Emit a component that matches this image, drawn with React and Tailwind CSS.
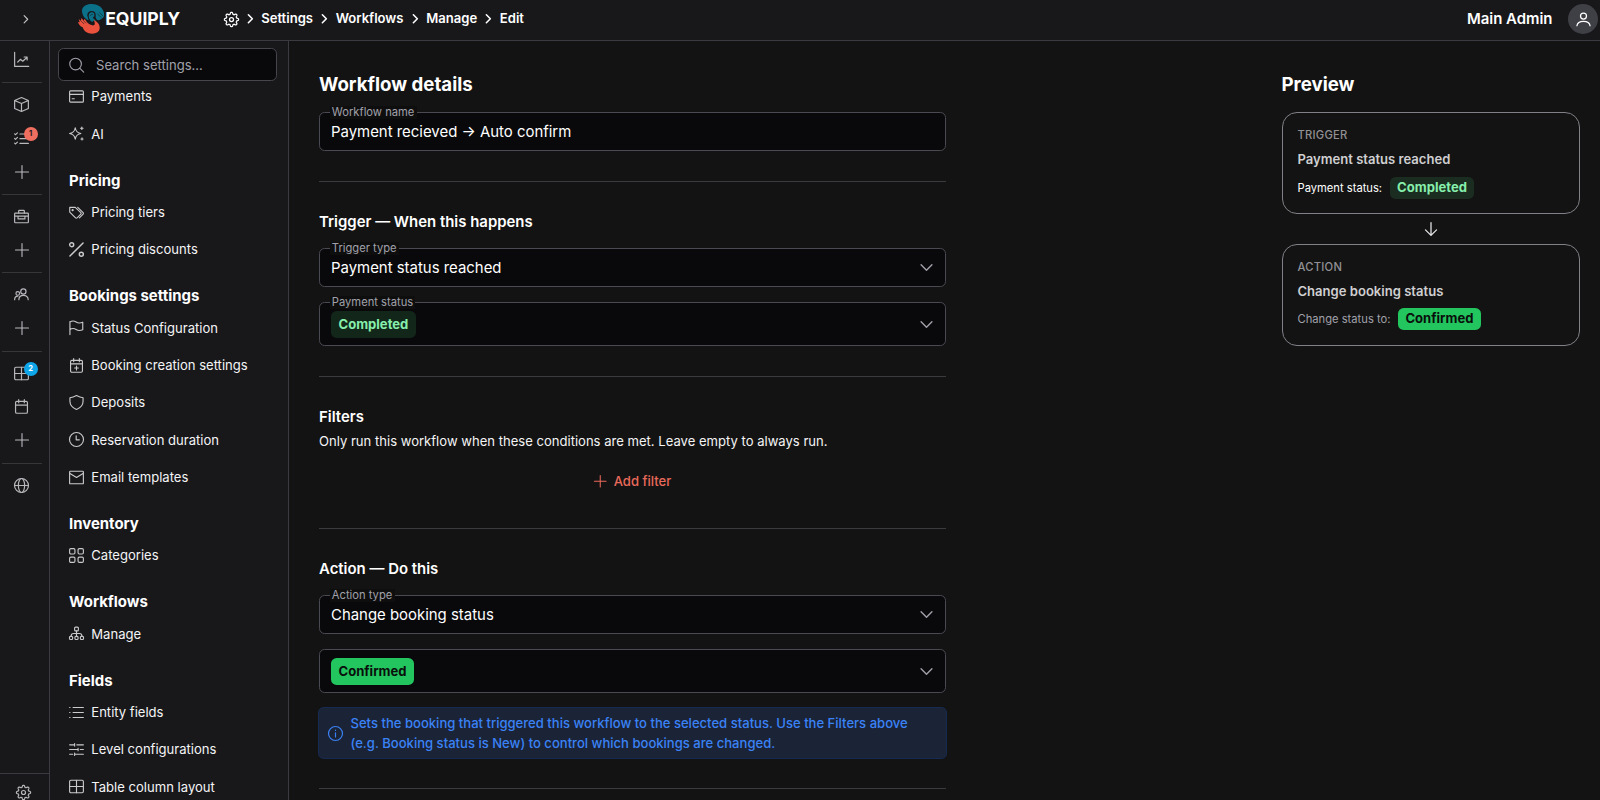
import React from "react";

function Svg({ className = "size-[15px]", sw = 1.9, children }) {
  return (
    <svg viewBox="0 0 24 24" fill="none" stroke="currentColor" strokeWidth={sw} strokeLinecap="round" strokeLinejoin="round" className={`shrink-0 overflow-visible ${className}`}>
      {children}
    </svg>
  );
}

const gearPath = (() => {
  const pts = [];
  for (let i = 0; i < 160; i++) {
    const a = (i / 160) * Math.PI * 2;
    const k = Math.max(-1, Math.min(1, 1.5 * Math.cos(8 * a)));
    const r = 9.9 + 1.4 * k;
    pts.push(`${(12 + r * Math.sin(a)).toFixed(2)} ${(12 - r * Math.cos(a)).toFixed(2)}`);
  }
  return `M${pts.join("L")}Z`;
})();

const icons = {
  gear: <><path d={gearPath} /><circle cx="12" cy="12" r="3.2" /></>,
  chart: <><path d="M1 .5V23h22.5" /><path d="M6 16l4.2-4.3 3.8 3L21 8.5M16.2 8H21v4.8" /></>,
  cube: <path d="M12 .8L23 5.6v12.8L12 23.2 1 18.4V5.6zM1 5.6l11 4.9 11-4.9M12 10.5v12.7" />,
  tasks: <path d="M1 4.6l1.5 1.3L5.5 2.9M1 12l1.5 1.3 3-3M1 19.4l1.5 1.3 3-3M9.5 4.8H23M9.5 12.3H23M9.5 19.8H23" />,
  plus: <path d="M12 .8v22.4M.8 12h22.4" />,
  briefcase: <><rect x="1" y="6.500" width="22" height="15.500" rx="1.200" /><path d="M7.500 6.500V3.200c0-.6.400-1 1-1h7c.6 0 1 .4 1 1v3.300M1 11.500h22M6.500 11.500v4.300h11v-4.300" /></>,
  users: <><circle cx="15" cy="7.200" r="4.200" /><path d="M7.800 20.300c0-4.200 3-7 7.200-7s7.700 2.800 7.700 7" /><circle cx="6" cy="10.300" r="2.900" /><path d="M1 20.300c0-3.800 2-5.800 5.300-5.800" /></>,
  table: <><rect x="1" y="2" width="22" height="20" rx="2" /><path d="M12 2v20M1 12h22" /></>,
  calendar: <><rect x="2.500" y="3.800" width="19" height="19" rx="2" /><path d="M2.500 9.800h19M7.500 1v5M16.500 1v5" /></>,
  calendarPlus: <><rect x="2.500" y="3.800" width="19" height="19" rx="2" /><path d="M2.500 9.300h19M7.500 1v5M16.500 1v5M12 13v6M9 16h6" /></>,
  globe: <><circle cx="12" cy="12" r="11.200" /><ellipse cx="12" cy="12" rx="5" ry="11.200" /><path d="M1 12h22" /></>,
  card: <><rect x="1" y="3" width="22" height="18" rx="1.500" /><path d="M1 8.500h22M5 15.500h3.500" /></>,
  sparkles: <><path d="M10 3c1 5.600 2.700 7.600 9 9-6.300 1.400-8 3.400-9 9-1-5.600-2.700-7.600-9-9 6.300-1.400 8-3.400 9-9z" /><path d="M20.500 1.500v4M18.500 3.500h4M20.800 19v3.400M19.100 20.700h3.400" /></>,
  tags: <><path d="M1.200 3.800v7.500l9.300 9.300c.7.700 1.700.7 2.400 0l6-6c.7-.7.700-1.700 0-2.400L10 3.800z" /><path d="M14 3.800l8.600 8.300c.7.700.7 1.700 0 2.400l-6 6" /><circle cx="5.800" cy="8.300" r=".9" /></>,
  percent: <><circle cx="4.300" cy="4.300" r="3.200" /><circle cx="19.700" cy="19.700" r="3.200" /><path d="M22.500 1.500l-21 21" /></>,
  flag: <path d="M1.500 23.300V2.600M1.500 3.200c4-2.700 7-2 10 0s6.500 2 10.500.3v12c-4 1.700-7.500 1.700-10.500-.3s-6-2.700-10 0" />,
  shield: <path d="M1.500 4.500C6 4 9 2.500 12 .8c3 1.700 6 3.200 10.500 3.700v5.500c0 6-4.500 10.700-10.500 13.200C6 20.700 1.500 16 1.500 10z" />,
  clock: <><circle cx="12" cy="12" r="11.200" /><path d="M11.500 6v6.500h5" /></>,
  mail: <><rect x="1" y="2" width="22" height="20" rx="1" /><path d="M1.500 5.500L12 12l10.500-6.500" /></>,
  grid: <><rect x="1" y="1" width="8.500" height="8.500" rx="2" /><rect x="14.500" y="1" width="8.500" height="8.500" rx="2" /><rect x="1" y="14.500" width="8.500" height="8.500" rx="2" /><rect x="14.500" y="14.500" width="8.500" height="8.500" rx="2" /></>,
  sitemap: <><rect x="9" y="1.800" width="6" height="6" rx="1.500" /><rect x=".8" y="16.500" width="5" height="5" rx="1.500" /><rect x="9.500" y="16.500" width="5" height="5" rx="1.500" /><rect x="18.200" y="16.500" width="5" height="5" rx="1.500" /><path d="M12 7.800v8.700M3.300 16.500c0-2.900 1.200-4.500 4-4.500h9.400c2.800 0 4 1.600 4 4.500" /></>,
  list: <path d="M6.500 4H23M6.500 12H23M6.500 20H23M1 4h.6M1 12h.6M1 20h.6" />,
  sliders: <path d="M1 4.500h8M9 2.500v4M12.500 4.500H23M1 12h13.500M14.500 10v4M18 12h5M1 19.500h5M9 17.500v4M9 19.500h14" />,
  search: <><circle cx="10.500" cy="10.500" r="9.300" /><path d="M17.500 17.500l6 6" /></>,
  info: <><circle cx="12" cy="12" r="11.200" /><path d="M12 11v6.500M12 6.700v.3" /></>,
  user: <><circle cx="12" cy="6.500" r="4.800" /><path d="M1.500 22c.6-4.500 4-7 10.500-7s9.900 2.500 10.500 7" /></>,
  right: <path d="M6 2l10 10L6 22" />,
  down: <path d="M2 7l10 10L22 7" />,
  arrowDown: <path d="M12 1v22M2.500 13.500L12 23l9.500-9.500" />,
};

function Icon({ name, className, sw }) {
  return <Svg className={className} sw={sw}>{icons[name]}</Svg>;
}

function Logo() {
  return (
    <svg viewBox="0 0 80 90" className="h-[30px] w-[26.7px] shrink-0">
      <path fill="#0b7189" d="M12 22C11 8 25 0 41 0c18 0 31 9 35 21l4 11-2 5-3 4-5 4-7 4-5-1c-4-3-6-8-5-13 1-9-4-14-12-14-9 0-14 7-13 14l4 14C21 45 13 35 12 22z" />
      <path fill="#0b7189" d="M33 30c4-7 14-6 16 0 1 6-1 9-5 11l10 9-9 0-1 4c-9-4-14-14-11-24z" />
      <path fill="#ea523e" d="M0 54l5 1-3-10 7 6 1-9 7 8 3-6 7 11c6 6 14 10 20 9 5-1 4-9 0-16 12 5 19 14 18 25-1 11-10 16-22 16-14 0-25-6-29-19-7-3-12-8-14-16z" />
      <path stroke="#18181b" strokeWidth="1.600" fill="none" d="M64 25l11 11M58 29l12 12M9 51l9 9M17 50l7 8M38 36c-2-4 5-7 7-3" />
    </svg>
  );
}

function RailIcon({ name, className = "", badge, badgeClass = "" }) {
  return (
    <div className={`relative flex shrink-0 items-center pl-[14.200px] ${className}`}>
      <Icon name={name} className={name === "plus" ? "mx-[.5px] size-[14px]" : "size-[15px]"} />
      {badge && (
        <span className={`absolute left-[23.700px] top-1/2 flex size-[14px] -translate-y-[11px] items-center justify-center rounded-full text-[7.500px] font-bold leading-none ${badgeClass}`}>{badge}</span>
      )}
    </div>
  );
}

const RailLine = () => <div className="ml-[2px] h-px w-[40px] shrink-0 bg-[#35353a]" />;

function Rail() {
  return (
    <aside className="flex w-[50px] shrink-0 flex-col border-r border-[#3a3a40] text-[#b9b9bd]">
      <RailIcon name="chart" className="mt-[2px] h-[33px]" />
      <div className="h-[6px]" />
      <RailLine />
      <RailIcon name="cube" className="mt-[4px] h-[34px]" />
      <RailIcon name="tasks" className="h-[34px]" badge="1" badgeClass="bg-[#ee6f5f] text-[#18181b]" />
      <RailIcon name="plus" className="h-[33px]" />
      <div className="h-[6px]" />
      <RailLine />
      <RailIcon name="briefcase" className="mt-[5px] h-[33px]" />
      <RailIcon name="plus" className="h-[34px]" />
      <div className="h-[5px]" />
      <RailLine />
      <RailIcon name="users" className="mt-[5px] h-[33px]" />
      <RailIcon name="plus" className="h-[34px]" />
      <div className="h-[6px]" />
      <RailLine />
      <RailIcon name="table" className="mt-[4px] h-[34px]" badge="2" badgeClass="bg-[#0ea5e9] text-white" />
      <RailIcon name="calendar" className="h-[33px]" />
      <RailIcon name="plus" className="h-[33px]" />
      <div className="h-[7px]" />
      <RailLine />
      <RailIcon name="globe" className="mt-[4px] h-[34px]" />
      <div className="mt-auto flex h-[27px] shrink-0 items-start border-t border-[#3a3a40] pl-[16.300px] pt-[11px]">
        <Icon name="gear" className="size-[15px]" />
      </div>
    </aside>
  );
}

const sections = [
  { items: [["card", "Payments"], ["sparkles", "AI"]] },
  { title: "Pricing", items: [["tags", "Pricing tiers"], ["percent", "Pricing discounts"]] },
  { title: "Bookings settings", items: [["flag", "Status Configuration"], ["calendarPlus", "Booking creation settings"], ["shield", "Deposits"], ["clock", "Reservation duration"], ["mail", "Email templates"]] },
  { title: "Inventory", items: [["grid", "Categories"]] },
  { title: "Workflows", items: [["sitemap", "Manage"]] },
  { title: "Fields", items: [["list", "Entity fields"], ["sliders", "Level configurations"], ["table", "Table column layout"]] },
];

function Sidebar() {
  return (
    <aside className="flex w-[239px] shrink-0 flex-col border-r border-[#3a3a40] pt-[7px]">
      <div className="ml-[8px] flex h-[33px] w-[219px] shrink-0 items-center gap-[12px] rounded-[5.600px] border border-[#46464d] bg-[#09090b] pl-[10px] text-[13.070px] text-[#a1a1aa]">
        <Icon name="search" className="size-[15px] translate-y-[.5px]" sw={1.800} />
        <span className="pt-[2px]">Search settings...</span>
      </div>
      <nav className="-mt-[3px] min-h-0 flex-1 overflow-hidden pl-[19px]">
        {sections.map((s, i) => (
          <div key={i}>
            {s.title && <h3 className="flex h-[41px] items-center pt-[15.600px] text-[14.930px] font-bold text-white">{s.title}</h3>}
            {s.items.map(([icon, label]) => (
              <div key={label} className="flex h-[37.330px] items-center gap-[7.300px] text-[13.070px] text-[#f4f4f5]">
                <Icon name={icon} className="size-[15px] text-[#cacacd]" sw={icon === "percent" ? 2.300 : 1.800} />
                <span className="pt-[1.200px]">{label}</span>
              </div>
            ))}
          </div>
        ))}
      </nav>
    </aside>
  );
}

function Header() {
  const crumbs = ["Settings", "Workflows", "Manage", "Edit"];
  return (
    <header className="flex h-[41px] shrink-0 items-center border-b border-[#3a3a40] bg-[#18181b] pb-[2px] text-white">
      <div className="flex w-[50px] shrink-0 justify-center pl-[2px]"><Icon name="right" className="size-[8.500px] text-[#c4c4c7]" sw={3.200} /></div>
      <div className="ml-[27.500px] flex w-[146px] shrink-0 items-center">
        <Logo />
        <span className="ml-[1px] text-[17.600px] font-bold leading-none">EQUIPLY</span>
      </div>
      <div className="flex items-center text-[13.070px] font-semibold">
        <Icon name="gear" className="size-[15px]" sw={2} />
        {crumbs.map((c) => (
          <React.Fragment key={c}>
            <span className="flex w-[22.700px] justify-center pl-px"><Icon name="right" className="size-[9.500px]" sw={4} /></span>
            <span>{c}</span>
          </React.Fragment>
        ))}
      </div>
      <div className="ml-auto flex items-center gap-[15.500px] pr-[2px]">
        <span className="text-[14.930px] font-semibold">Main Admin</span>
        <span className="flex size-[30px] items-center justify-center rounded-full bg-[#3f3f46]"><Icon name="user" className="size-[15px]" sw={2} /></span>
      </div>
    </header>
  );
}

function Field({ label, tall, select, className = "", children }) {
  return (
    <div className={`relative flex shrink-0 items-center justify-between rounded-[5.600px] border border-[#4a4a52] bg-[#09090b] pl-[11px] pr-[12.500px] text-[14.930px] text-white ${tall ? "h-[44px]" : "h-[39px]"} ${className}`}>
      {label && <span className="absolute -top-[7px] left-[9.500px] bg-[#0e0e0f] px-[2.300px] text-[11.200px] leading-[13px] text-[#a1a1aa]">{label}</span>}
      {children}
      {select && <Icon name="down" className="size-[13px] text-[#a1a1aa]" sw={2.600} />}
    </div>
  );
}

function Tag({ solid, className = "", children }) {
  return (
    <span className={`inline-flex items-center rounded-[5.600px] px-[7.500px] text-[13.070px] font-bold ${solid ? "bg-[#22c55e] text-[#0a0f0c]" : "text-[#86efac]"} ${className}`}>{children}</span>
  );
}

const Divider = ({ className }) => <div className={`h-px shrink-0 bg-[#3a3a3f] ${className}`} />;

function Heading({ className = "", children }) {
  return <h2 className={`shrink-0 text-[14.930px] font-semibold leading-[22px] text-white ${className}`}>{children}</h2>;
}

function PreviewCard({ kind, title, children }) {
  return (
    <div className="flex h-[102px] shrink-0 flex-col rounded-[15px] border border-[#808087] px-[15px] pt-[14px]">
      <div className="h-[17px] text-[11.200px] font-medium leading-[17px] tracking-[.25px] text-[#919194]">{kind}</div>
      <div className="mt-[5px] h-[20px] text-[13.070px] font-semibold leading-[20px] text-[#cfcfd1]">{title}</div>
      {children}
    </div>
  );
}

export default function App() {
  return (
    <div className="flex h-[800px] w-[1600px] flex-col overflow-hidden bg-[#18181b] font-['Inter',sans-serif] antialiased">
      <Header />
      <div className="flex min-h-0 flex-1">
        <Rail />
        <Sidebar />
        <main className="flex min-w-0 flex-1 justify-between bg-[#131313] pl-[30px] pr-[20px]">
          <section className="flex w-[627px] flex-col overflow-visible">
            <h1 className="mt-[31px] h-[26px] shrink-0 text-[18.670px] font-bold leading-[26px] text-white">Workflow details</h1>
            <Field label="Workflow name" className="mt-[14px]"><span className="pt-[2px]">Payment recieved → Auto confirm</span></Field>
            <Divider className="mt-[30px]" />
            <Heading className="mt-[29px]">Trigger — When this happens</Heading>
            <Field label="Trigger type" select className="mt-[15px]"><span className="pt-[2px]">Payment status reached</span></Field>
            <Field label="Payment status" select tall className="mt-[15px]"><Tag className="h-[27px] bg-[#13261a] pt-px">Completed</Tag></Field>
            <Divider className="mt-[30px]" />
            <Heading className="mt-[29px]">Filters</Heading>
            <p className="mt-[3px] h-[20px] shrink-0 text-[13.070px] leading-[20px] text-[#f4f4f5]">Only run this workflow when these conditions are met. Leave empty to always run.</p>
            <button className="mt-[20px] flex h-[20px] shrink-0 items-center justify-center gap-[7.500px] text-[13.070px] font-medium text-[#e96a5b]">
              <Icon name="plus" className="size-[12.500px]" sw={2} />
              <span className="pt-[2px]">Add filter</span>
            </button>
            <Divider className="mt-[37px]" />
            <Heading className="mt-[29px]">Action — Do this</Heading>
            <Field label="Action type" select className="mt-[15px]"><span className="pt-[2px]">Change booking status</span></Field>
            <Field select tall className="mt-[15px]"><Tag solid className="h-[27px] pt-px">Confirmed</Tag></Field>
            <div className="-mx-px mt-[14px] flex h-[52px] shrink-0 items-center gap-[7.500px] rounded-[5.600px] border border-[#172a52] bg-[#1a2436] pl-[9px] text-[13.070px] font-medium leading-[19.600px] text-[#3b82f6]">
              <Icon name="info" className="size-[15px]" sw={1.900} />
              <p className="pt-px">Sets the booking that triggered this workflow to the selected status. Use the Filters above<br />(e.g. Booking status is New) to control which bookings are changed.</p>
            </div>
            <Divider className="mt-[29px]" />
          </section>
          <section className="flex w-[298.500px] flex-col">
            <h1 className="mt-[31px] h-[26px] shrink-0 text-[18.670px] font-bold leading-[26px] text-white">Preview</h1>
            <div className="h-[14px] shrink-0" />
            <PreviewCard kind="TRIGGER" title="Payment status reached">
              <div className="mt-[8px] flex h-[22px] items-center gap-[7.500px] text-[11.200px]">
                <span className="text-white">Payment status:</span>
                <Tag className="h-[22px] bg-[#1a2d20]">Completed</Tag>
              </div>
            </PreviewCard>
            <div className="flex h-[30px] items-center justify-center"><Icon name="arrowDown" className="size-[14px] text-[#e4e4e7]" sw={2.200} /></div>
            <PreviewCard kind="ACTION" title="Change booking status">
              <div className="mt-[7px] flex h-[22px] items-center gap-[7.500px] text-[11.200px]">
                <span className="text-[#a1a1aa]">Change status to:</span>
                <Tag solid className="h-[22.500px]">Confirmed</Tag>
              </div>
            </PreviewCard>
          </section>
        </main>
      </div>
    </div>
  );
}
